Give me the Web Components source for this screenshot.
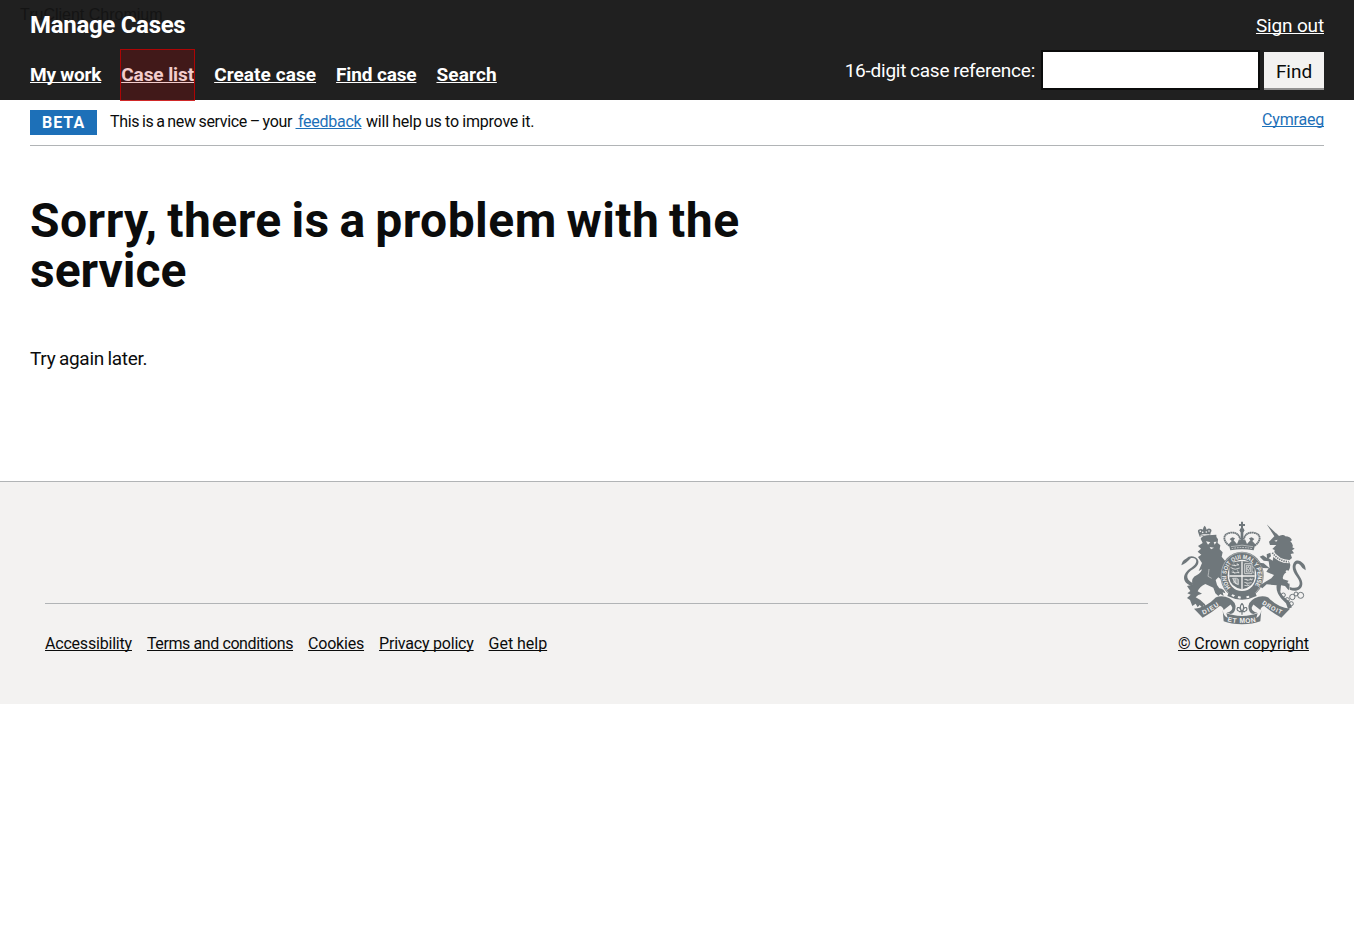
<!DOCTYPE html>
<html lang="en">
<head>
<meta charset="utf-8">
<title>Manage Cases</title>
<style>
body{margin:0;background:#fff;color:#0b0c0c;font-family:Roboto,"Liberation Sans",sans-serif}
</style>
</head>
<body>
<case-app></case-app>
<script>
const define = (name, html) => customElements.define(name, class extends HTMLElement {
  constructor() {
    super();
    const t = document.createElement('template');
    t.innerHTML = html;
    this.attachShadow({mode: 'open'}).append(t.content.cloneNode(true));
  }
});

define('text-link', `
<style>
:host{display:inline-block;white-space:nowrap}
a{color:inherit;text-decoration:underline;text-decoration-thickness:1px;text-underline-offset:1px;text-decoration-skip-ink:none}
</style><a><slot></slot></a>`);

define('target-highlight', `
<style>
:host{display:inline-block;position:relative}
i{position:absolute;left:-1px;right:-1px;top:-13px;bottom:-14px;box-sizing:border-box;border:1px solid rgba(200,0,0,.8);background:rgba(200,0,0,.2)}
</style><slot></slot><i></i>`);

define('case-search', `
<style>
:host{display:flex;align-items:flex-start;height:40px;font-size:19px;line-height:25px;color:#fff}
label{padding-top:8px;margin-right:6px;letter-spacing:-.24px;word-spacing:-.6px}
input{box-sizing:border-box;width:219px;height:40px;border:2px solid #0b0c0c;border-radius:0;background:#fff;margin:0 4px 0 0;padding:5px}
button{box-sizing:border-box;width:60px;height:38px;margin:2px 0 0;padding:2px 0 0;border:0;border-bottom:2px solid #929191;border-radius:0;background:#f3f2f1;color:#0b0c0c;font:400 19px/25px Roboto,sans-serif;letter-spacing:-.05px}
</style>
<label>16-digit case reference:</label><input><button>Find</button>`);

define('site-header', `
<style>
:host{display:block;position:relative;box-sizing:border-box;height:100px;background:#202020;color:#fff;padding:10px 30px 0}
.tag{position:absolute;left:20px;top:6px;font:16px/18px "Liberation Sans",Arial,sans-serif;color:#141414;white-space:nowrap}
.top,.bottom{display:flex;justify-content:space-between;position:relative}
.top{height:40px}
.name{font:700 24px/30px Roboto,sans-serif;letter-spacing:-.3px}
.out{font-size:19px;line-height:25px;padding-top:3px;letter-spacing:-.16px}
nav{display:flex;gap:20px;padding-top:12px;font:700 19px/25px Roboto,sans-serif;height:25px}
</style>
<span class="tag">TruClient Chromium</span>
<div class="top"><span class="name">Manage Cases</span><span class="out"><text-link>Sign out</text-link></span></div>
<div class="bottom">
<nav>
<text-link style="letter-spacing:-.22px">My work</text-link>
<target-highlight><text-link style="letter-spacing:-.07px">Case list</text-link></target-highlight>
<text-link style="letter-spacing:.07px">Create case</text-link>
<text-link style="letter-spacing:-.14px">Find case</text-link>
<text-link style="letter-spacing:.16px">Search</text-link>
</nav>
<case-search></case-search>
</div>`);

define('phase-banner', `
<style>
:host{display:flex;box-sizing:border-box;height:46px;margin:0 30px;border-bottom:1px solid #b1b4b6;padding-top:10px;font-size:16px;line-height:20px}
b{box-sizing:border-box;width:67px;height:25px;background:#1d70b8;color:#fff;padding:3px 0 0 12px;letter-spacing:1px;line-height:20px;margin-right:13px}
p{margin:0;padding-top:2px;flex:1;display:flex;white-space:pre}
.link{color:#1d70b8}
.a{width:185.5px;letter-spacing:-.35px;word-spacing:-.8px}
.f{width:70.5px;letter-spacing:-.25px;word-spacing:-1.3px}
.w{letter-spacing:-.22px;word-spacing:-.3px}
.cy{letter-spacing:-.19px}
</style>
<b>BETA</b>
<p><span class="a">This is a new service – your</span><span class="f link"><text-link>&nbsp;feedback</text-link></span><span class="w">will help us to improve it.</span></p>
<span class="link cy"><text-link>Cymraeg</text-link></span>`);

define('error-page', `
<style>
:host{display:block;box-sizing:border-box;height:335px;padding:50px 30px 0}
h1{margin:0;font-size:48px;line-height:50px;font-weight:700;letter-spacing:-.02px;width:720px}
.first{letter-spacing:.47px;word-spacing:-2.7px}
p{margin:50px 0 0;font-size:19px;line-height:25px;letter-spacing:-.3px;word-spacing:-.8px}
</style>
<h1><span class="first">Sorry, there is a problem with the</span> service</h1><p><slot></slot></p>`);

define('royal-crest', `
<style>
:host{display:block;width:131px;height:110px}
svg{display:block}
text{font-family:"Liberation Sans",sans-serif;font-weight:700;fill:#f3f2f1}
</style>
<svg width="131" height="110" viewBox="24 0 393 330" fill="#6f777b">
<defs>
<path id="ring" d="M182 218A47 51 0 1 1 250 218"/>
<path id="dieu" d="M100 299Q128 288 156 265"/>
<path id="mon" d="M172 319Q216 331 262 319"/>
<path id="droit" d="M275 266Q305 288 340 300"/>
<g id="scroll"><path d="M72 281Q108 279 138 247Q156 247 174 255Q184 261 180 270L161 285Q158 274 149 273Q124 294 98 308Z"/><path d="M158 285Q160 303 173 309L169 295Q187 302 216 303V328Q183 328 161 319Z"/><path d="M138 247Q158 240 178 250Q200 262 196 281Q193 295 182 297L170 293Q187 289 187 278Q183 264 160 257Z"/></g>
</defs>
<!-- lion -->
<path d="M89 65L85 53Q81 45 89 43Q94 40 98 44L101 36L104 32L107 36L110 44Q116 38 122 42Q127 46 122 53L120 62L105 60Z"/>
<g fill="#f3f2f1"><circle cx="91" cy="49" r="2.5"/><circle cx="98" cy="52" r="2.5"/><circle cx="109" cy="51" r="2.5"/><circle cx="117" cy="48" r="2.5"/><path d="M91 60Q105 55 119 58V60Q105 58 92 62Z"/></g>
<path d="M92 71Q98 61 114 61L139 59Q137 68 144 73L143 84L151 91L149 103L158 112L155 125L166 139L158 158V197L145 187L137 195Q139 210 148 220Q163 222 166 235L158 232L161 243L151 237L145 243L136 235L130 218L106 207Q88 216 83 229L96 236Q83 238 77 247Q91 253 105 268L108 280L101 271L98 279L89 270L83 277L77 266L67 273L60 255L51 249L62 239L52 235L61 228L51 213L67 209Q62 188 81 180Q94 173 96 163L86 168L96 144L84 126L94 119L83 110L93 101L84 93L98 84Z"/>
<path d="M108 79L121 82L114 89ZM131 81L140 80L134 89ZM119 96L132 98L123 103Z" fill="#f3f2f1"/>
<path d="M67 214C31 201 38 173 64 158C85 144 83 126 63 129C53 140 42 148 34 151Q37 135 48 131Q61 119 76 127C92 137 86 153 70 162C49 173 43 191 69 205Z"/>
<path d="M125 190L114 184Q116 172 117 162" fill="none" stroke="#f3f2f1" stroke-width="1.5"/>
<!-- crown -->
<path d="M213 20h6v7h6v6h-6v8h-6v-8h-6v-6h6Z"/><circle cx="216" cy="46" r="7"/>
<g fill="none" stroke="#6f777b" stroke-width="5.5" stroke-dasharray="5 1"><path d="M178 92C157 77 158 56 182 53C201 51 209 61 213 80M254 92C275 77 274 56 250 53C231 51 223 61 219 80"/></g>
<path d="M212 51H220V79L225 73L231 87L241 76L237 70L245 67L253 72L247 78L256 88L251 106Q216 100 181 106L176 88L185 78L179 72L187 67L195 70L191 76L201 87L207 73L212 79Z"/>
<path d="M183 95Q216 86 249 95" stroke="#f3f2f1" stroke-width="1.5" fill="none"/>
<path d="M185 101Q216 94 247 101" stroke="#f3f2f1" stroke-width="2" stroke-dasharray="5 3" fill="none"/>
<!-- garter and shield -->
<ellipse cx="216" cy="181" rx="65" ry="71"/>
<ellipse cx="216" cy="181" rx="62.5" ry="68.5" fill="none" stroke="#f3f2f1" stroke-width="1.2"/>
<ellipse cx="216" cy="181" rx="43" ry="47" fill="#f3f2f1"/>
<path d="M178 148Q216 128 254 148V190Q251 216 216 223Q181 216 178 190Z"/>
<path d="M214 139h4v83h-4ZM178 181h76v4h-76Z" fill="#f3f2f1"/>
<g fill="none" stroke="#f3f2f1" stroke-width="2.2"><path d="M185 150q9 5 22-2M185 160q10 6 24-1M185 171q9 5 23 1M224 146h22v30h-22zM229 151h12v20h-12zM235 154q-7 7 0 13q7-6 0-13M188 190q14-2 17 3v16q-10-1-17-19M192 192v12M196 191v16M201 192v17M223 193q11 5 26-1M223 202q11 5 22 1M223 211q9 3 16-1"/></g>
<path d="M191 146l5 8M201 144l4 9M188 166l6 10M202 164l4 11M228 191l5 7M240 189l5 8M229 204l6 8M181 158h6M248 153l4 8M248 168l4 8" stroke="#f3f2f1" stroke-width="1.5"/>
<text font-size="18" textLength="222" lengthAdjust="spacingAndGlyphs"><textPath href="#ring">HONI SOIT QUI MAL Y PENSE</textPath></text>
<path d="M177 230Q216 253 255 230L260 243Q216 265 172 243Z"/>
<path d="M187 238l8 3l-4 5l-7-4M205 243l8 2l-2 6l-8-2M229 244l8-2l1 6l-8 2" fill="#f3f2f1"/>
<!-- unicorn -->
<path d="M290 28L324 61L316 68ZM300 90L297 80L313 64L319 55L327 63Q341 56 346 64Q361 64 366 76L361 79Q372 89 367 97L374 101L366 106L372 115L362 117L366 129L356 137L361 149Q360 169 345 175Q335 185 340 193L357 198Q361 214 356 226L345 213L333 211L331 231Q339 247 357 258L366 277L354 282L348 265L333 250Q317 229 320 211L290 208L277 220L268 213L284 202L304 190L312 180L289 170L296 160L278 159L266 143L281 145L299 160L296 139L281 137L269 125L279 121L291 129L290 118L301 113L303 124L296 130L308 137L314 105L307 102L319 90Z"/>
<path d="M308 106Q329 136 359 135L356 145Q323 143 304 119Z" fill="#f3f2f1"/>
<path d="M307 113Q328 140 356 140" stroke="#6f777b" stroke-width="5" stroke-dasharray="4 3" fill="none"/>
<path d="M313 77l10-3l-4 6Z" fill="#f3f2f1"/>
<path d="M359 216Q385 224 389 207C391 190 367 177 368 155C370 132 389 132 399 145Q407 151 407 166Q397 162 391 151C380 140 374 151 378 163C383 180 398 191 397 207C396 225 377 232 359 224Z"/>
<g fill="none" stroke="#6f777b" stroke-width="3"><circle cx="340" cy="240" r="6"/><circle cx="352" cy="254" r="6"/><circle cx="367" cy="246" r="8"/><circle cx="378" cy="237" r="6"/><circle cx="392" cy="241" r="9"/><circle cx="364" cy="266" r="6"/></g>
<g fill="#f3f2f1"><circle cx="351" cy="170" r="4"/><circle cx="359" cy="185" r="5"/><circle cx="357" cy="202" r="4"/></g>
<!-- motto scroll -->
<use href="#scroll"/><use href="#scroll" transform="matrix(-1 0 0 1 432 0)"/>
<g fill="none" stroke="#6f777b" stroke-width="3.5"><path d="M216 265Q206 276 216 290Q226 276 216 265M213 288Q211 275 203 278Q198 285 207 289M219 288Q221 275 229 278Q234 285 225 289M207 290H225M216 290V299"/></g>
<text font-size="19" textLength="55"><textPath href="#dieu">DIEU</textPath></text>
<text font-size="20" textLength="87"><textPath href="#mon">ET MON</textPath></text>
<text font-size="18" textLength="66"><textPath href="#droit">DROIT</textPath></text>
</svg>`);

define('site-footer', `
<style>
:host{display:flex;box-sizing:border-box;height:223px;background:#f3f2f1;border-top:1px solid #b1b4b6;padding:33px 45px 0;font-size:16px;line-height:20px;gap:30px}
.links{flex:1;margin-top:88px;border-top:1px solid #b1b4b6}
nav{display:flex;gap:15px;padding-top:30px}
.crest{width:131px}
royal-crest{margin-bottom:9px}
</style>
<div class="links"><nav>
<text-link style="letter-spacing:-.2px">Accessibility</text-link>
<text-link style="letter-spacing:-.4px">Terms and conditions</text-link>
<text-link style="letter-spacing:-.2px">Cookies</text-link>
<text-link style="letter-spacing:-.21px">Privacy policy</text-link>
<text-link style="letter-spacing:-.03px">Get help</text-link>
</nav></div>
<div class="crest"><royal-crest></royal-crest><text-link style="letter-spacing:-.09px">© Crown copyright</text-link></div>`);

define('case-app', `
<style>:host{display:block;min-height:945px}</style>
<site-header></site-header>
<phase-banner></phase-banner>
<error-page>Try again later.</error-page>
<site-footer></site-footer>`);
</script>
</body>
</html>
